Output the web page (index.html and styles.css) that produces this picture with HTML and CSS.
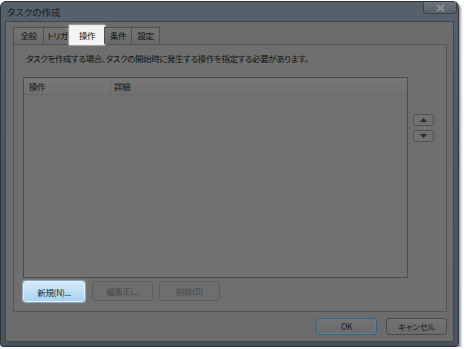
FILE: index.html
```html
<!DOCTYPE html>
<html lang="ja">
<head>
    <meta charset="UTF-8">
    <title>タスクの作成</title>
    <link rel="stylesheet" href="styles.css">
</head>
<body>
    <div class="window">
        <div class="titlebar">
            <span class="title">タスクの作成</span>
            <span class="close">
                <svg width="11" height="8" viewBox="0 0 11 8"><path d="M2 1 L9 7 M9 1 L2 7" stroke="#8d9196" stroke-width="2"/></svg>
            </span>
        </div>
        <div class="client">
            <div class="tabs">
                <span class="tab t1">全般</span>
                <span class="tab t2">トリガ</span>
                <span class="tab t3 active">操作</span>
                <span class="tab t4">条件</span>
                <span class="tab t5">設定</span>
            </div>
            <div class="panel">
                <p class="hint">タスクを作成する場合、タスクの開始時に発生する操作を指定する必要があります。</p>
                <div class="list-row">
                    <div class="list">
                        <div class="list-head">
                            <span class="col-op">操作</span>
                            <span class="col-detail">詳細</span>
                        </div>
                    </div>
                    <div class="order">
                        <button class="arrow"><svg width="7" height="4" viewBox="0 0 7 4"><path d="M0 4 L3.5 0 L7 4 Z" fill="#2a2a2a"/></svg></button>
                        <button class="arrow"><svg width="7" height="4" viewBox="0 0 7 4"><path d="M0 0 L3.5 4 L7 0 Z" fill="#2a2a2a"/></svg></button>
                    </div>
                </div>
                <div class="actions">
                    <button class="btn primary-focus">新規(N)...</button>
                    <button class="btn disabled">編集(E)...</button>
                    <button class="btn disabled">削除(D)</button>
                </div>
            </div>
            <div class="footer">
                <button class="btn ok">OK</button>
                <button class="btn cancel">キャンセル</button>
            </div>
        </div>
    </div>
</body>
</html>
```
FILE: styles.css
```css
* {
    box-sizing: border-box;
    margin: 0;
    padding: 0;
}
body {
    background: #fcfcfc;
    font-family: "Noto Sans CJK JP", "Noto Sans", sans-serif;
    font-size: 8.5px;
    font-feature-settings: "palt";
    letter-spacing: -0.4px;
    color: #111111;
}
.window {
    width: 459px;
    height: 346px;
    margin-top: 1px;
    background: linear-gradient(#56616c, #4d5761 40%, #4a535c);
    border: 1px solid #2e343a;
    border-radius: 6px 6px 3px 3px;
    box-shadow: 2px 2px 2px rgba(0, 0, 0, 0.35);
    padding: 0 4px 4px 4px;
    display: flex;
    flex-direction: column;
}
.titlebar {
    height: 19px;
    display: flex;
    align-items: flex-start;
}
.title {
    font-size: 9.5px;
    letter-spacing: 0;
    color: #1c1c1c;
    padding: 3px 0 0 2px;
    line-height: 14px;
}
.close {
    margin-left: auto;
    margin-right: -3px;
    width: 34px;
    height: 12px;
    border: 1px solid #3a4148;
    border-top: none;
    border-radius: 0 0 4px 4px;
    background: linear-gradient(#6d737a, #5a6168);
    display: flex;
    align-items: center;
    justify-content: center;
}
.client {
    flex: 1;
    background: #6c6c6c;
    border: 1px solid #3f464d;
    padding: 2px 6px 0 7px;
    display: flex;
    flex-direction: column;
}
.tabs {
    display: flex;
    align-items: flex-end;
    height: 20px;
    position: relative;
    z-index: 1;
}
.tab {
    height: 17px;
    border: 1px solid #505050;
    border-bottom: none;
    background: linear-gradient(#767676, #6a6a6a);
    line-height: 15px;
    text-align: center;
    margin-right: -1px;
    white-space: nowrap;
}
.t1 { width: 31px; }
.t2 { width: 29px; }
.t3 { width: 36px; }
.t4 { width: 28px; }
.t5 { width: 29px; }
.tab.active {
    height: 20px;
    background: #f4f4f4;
    border-color: #e8e8e8;
    box-shadow: 0 0 2px #ffffff;
    margin: 0 -1px -1px -2px;
    line-height: 19px;
    color: #101010;
}
.panel {
    width: 434px;
    height: 268px;
    border: 1px solid #545454;
    background: #6f6f6f;
    padding: 6px 0 0 9px;
    display: flex;
    flex-direction: column;
}
.hint {
    margin-left: 3px;
    line-height: 14px;
    height: 14px;
    white-space: nowrap;
}
.list-row {
    display: flex;
    margin-top: 12px;
}
.list {
    width: 385px;
    height: 201px;
    border: 1px solid #4c4c4c;
    background: #727272;
}
.list-head {
    display: flex;
    height: 17px;
    line-height: 16px;
    border-bottom: 1px solid #686868;
    background: linear-gradient(#777777, #717171);
}
.col-op {
    width: 87px;
    padding-left: 5px;
    border-right: 1px solid #686868;
}
.col-detail {
    padding-left: 3px;
}
.order {
    margin-left: 5px;
    padding-top: 37px;
    display: flex;
    flex-direction: column;
    gap: 4px;
}
.arrow {
    width: 21px;
    height: 12px;
    border: 1px solid #555555;
    border-radius: 2px;
    background: #707070;
    display: flex;
    align-items: center;
    justify-content: center;
}
.actions {
    display: flex;
    margin-top: 3px;
    gap: 7px;
}
.btn {
    font-family: "Noto Sans CJK JP", "Noto Sans", sans-serif;
    font-size: 8.5px;
    font-feature-settings: "palt";
    letter-spacing: -0.3px;
    height: 20px;
    width: 61px;
    border: 1px solid #555555;
    border-radius: 3px;
    background: linear-gradient(#747474, #6a6a6a);
    color: #1a1a1a;
    line-height: 18px;
}
.primary-focus {
    width: 62px;
    height: 21px;
    border: 1px solid #e6f2fa;
    background: linear-gradient(#d4ebf9, #a9d4f0);
    box-shadow: 0 0 0 1px #8aa8bc, 0 0 2px #ffffff;
    color: #202020;
}
.disabled {
    color: #484848;
    border-color: #5e5e5e;
    background: #6e6e6e;
}
.actions .disabled:last-child {
    margin-left: -1px;
}
.footer {
    display: flex;
    justify-content: flex-end;
    gap: 9px;
    padding: 6px 0 0 0;
}
.ok {
    width: 61px;
    height: 17px;
    line-height: 15px;
    border-color: #36627e;
    box-shadow: inset 0 0 0 1px #5f7f93;
}
.cancel {
    width: 61px;
    height: 17px;
    line-height: 15px;
    border-color: #4a4a4a;
}
```
